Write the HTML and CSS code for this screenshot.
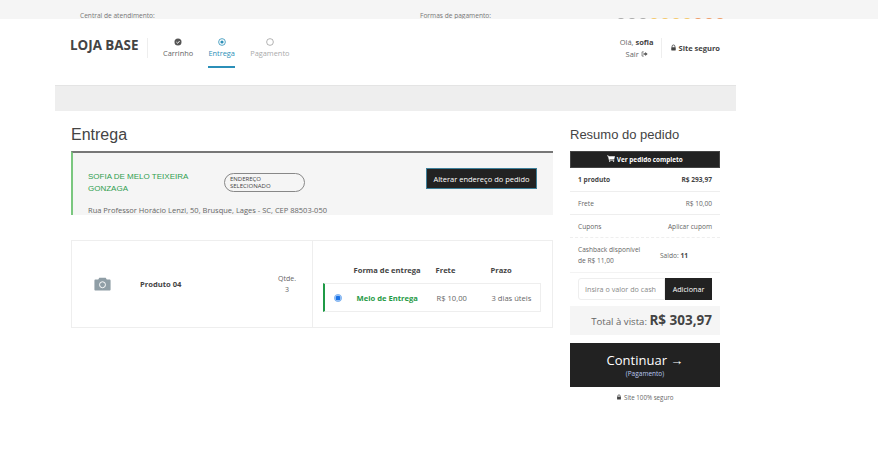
FILE: index.html
```html
<!DOCTYPE html>
<html lang="pt-BR">
<head>
    <meta charset="UTF-8">
    <meta name="viewport" content="width=device-width, initial-scale=1.0">
    <title>Entrega - Loja Base</title>
    <link rel="stylesheet" href="styles.css">
</head>
<body>

    <div class="topbar">
        <span class="topbar-atend">Central de atendimento:</span>
        <span class="topbar-pag">Formas de pagamento:</span>
        <div class="pay-icons">
            <i class="pay-dark"></i><i class="pay-dark"></i><i class="pay-dark"></i>
            <i class="pay-yellow"></i><i class="pay-yellow"></i><i class="pay-yellow"></i><i class="pay-yellow"></i>
            <i class="pay-orange"></i><i class="pay-orange"></i><i class="pay-orange"></i>
        </div>
    </div>

    <header class="header">
        <div class="logo">LOJA BASE</div>
        <nav class="steps">
            <div class="step step-done">
                <svg class="step-icon" viewBox="0 0 10 10"><circle cx="5" cy="5" r="4.4" fill="#555"/><path d="M3 5.1l1.5 1.5L7 3.8" fill="none" stroke="#fff" stroke-width="1.2"/></svg>
                <span>Carrinho</span>
            </div>
            <div class="step step-active">
                <svg class="step-icon" viewBox="0 0 10 10"><circle cx="5" cy="5" r="4.2" fill="none" stroke="#2b8fb8" stroke-width="1"/><circle cx="5" cy="5" r="2" fill="#2b8fb8"/></svg>
                <span>Entrega</span>
            </div>
            <div class="step step-next">
                <svg class="step-icon" viewBox="0 0 10 10"><circle cx="5" cy="5" r="4.2" fill="none" stroke="#888" stroke-width="0.8"/></svg>
                <span>Pagamento</span>
            </div>
        </nav>
        <div class="user">
            <div>Olá, <b>sofia</b></div>
            <div>Sair
                <svg class="exit-icon" viewBox="0 0 10 8"><path d="M4 1H1.5v6H4" fill="none" stroke="#555" stroke-width="1"/><path d="M3.5 3h2.5V1l3.5 3-3.5 3V5H3.5z" fill="#555"/></svg>
            </div>
        </div>
        <div class="secure">
            <svg class="lock-icon" viewBox="0 0 10 10"><path d="M3 5V3.4a2 2 0 0 1 4 0V5" fill="none" stroke="#444" stroke-width="1.2"/><rect x="1.8" y="4.6" width="6.4" height="4.6" rx="0.6" fill="#444"/></svg>
            Site seguro
        </div>
    </header>

    <div class="notice-bar"></div>

    <main class="content">
        <section class="delivery">
            <h1>Entrega</h1>

            <div class="address">
                <div class="address-top">
                    <div class="address-name">SOFIA DE MELO TEIXEIRA GONZAGA</div>
                    <div class="address-tag">ENDEREÇO<br>SELECIONADO</div>
                    <button class="btn-address">Alterar endereço do pedido</button>
                </div>
                <div class="address-line">Rua Professor Horácio Lenzi, 50, Brusque, Lages - SC, CEP 88503-050</div>
            </div>

            <div class="shipment">
                <div class="product">
                    <svg class="camera" viewBox="0 0 16 13"><path d="M5 0.5h6l1 1.8h2.6c.6 0 1 .4 1 1v8.4c0 .6-.4 1-1 1H1.4c-.6 0-1-.4-1-1V3.3c0-.6.4-1 1-1H4z" fill="#8f9ea6"/><circle cx="8" cy="7.2" r="2.8" fill="none" stroke="#fff" stroke-width="0.9"/></svg>
                    <div class="product-name">Produto 04</div>
                    <div class="product-qty">Qtde.<br>3</div>
                </div>
                <div class="shipping">
                    <div class="shipping-head">
                        <span class="col-name">Forma de entrega</span>
                        <span class="col-price">Frete</span>
                        <span class="col-time">Prazo</span>
                    </div>
                    <div class="shipping-row">
                        <span class="radio"></span>
                        <span class="col-name option-name">Meio de Entrega</span>
                        <span class="col-price">R$ 10,00</span>
                        <span class="col-time">3 dias úteis</span>
                    </div>
                </div>
            </div>
        </section>

        <aside class="summary">
            <h2>Resumo do pedido</h2>
            <button class="btn-order">
                <svg class="cart-icon" viewBox="0 0 12 10"><path d="M0 .6h2l.5 1.2H12l-1.2 4.4H3.6L3.9 7h7v.9H3L1.5 1.5H0z" fill="#fff"/><circle cx="4" cy="9" r="1" fill="#fff"/><circle cx="9.8" cy="9" r="1" fill="#fff"/></svg>
                Ver pedido completo
            </button>
            <div class="sum-row sum-strong"><span>1 produto</span><span>R$ 293,97</span></div>
            <div class="sum-row"><span>Frete</span><span>R$ 10,00</span></div>
            <div class="sum-row sum-dashed"><span>Cupons</span><span class="coupon">Aplicar cupom</span></div>
            <div class="sum-row sum-cash">
                <span class="cash-label">Cashback disponível<br>de R$ 11,00</span>
                <span class="cash-balance">Saldo: <b>11</b></span>
            </div>
            <div class="cash-form">
                <input type="text" class="cash-input" placeholder="Insira o valor do cash">
                <button class="btn-cash">Adicionar</button>
            </div>
            <div class="total">Total à vista: <b>R$ 303,97</b></div>
            <button class="btn-continue">
                <span class="continue-main">Continuar →</span>
                <span class="continue-sub">(Pagamento)</span>
            </button>
            <div class="safe">
                <svg class="lock-icon-sm" viewBox="0 0 10 10"><path d="M3 5V3.4a2 2 0 0 1 4 0V5" fill="none" stroke="#444" stroke-width="1.2"/><rect x="1.8" y="4.6" width="6.4" height="4.6" rx="0.6" fill="#444"/></svg>
                Site 100% seguro
            </div>
        </aside>
    </main>

</body>
</html>
```

FILE: styles.css
```css
* {
    box-sizing: border-box;
}

html,
body {
    margin: 0;
    padding: 0;
}

body {
    font-family: 'Open Sans', sans-serif;
    color: #666;
    background-color: #fff;
    width: 878px;
    height: 450px;
    overflow: hidden;
}

button {
    font-family: inherit;
    cursor: pointer;
}

/* top strip */
.topbar {
    height: 19px;
    background-color: #f5f5f5;
    font-size: 6.6px;
    color: #777;
    padding-top: 11px;
    padding-left: 80px;
    display: flex;
    overflow: hidden;
}

.topbar-atend {
    width: 340px;
    flex-shrink: 0;
}

.topbar-pag {
    width: 197px;
    flex-shrink: 0;
}

.pay-icons {
    display: flex;
    gap: 3px;
    padding-top: 7px;
}

.pay-icons i {
    display: block;
    width: 8px;
    height: 8px;
    border-radius: 50%;
}

.pay-dark {
    background-color: #aaa;
}

.pay-yellow {
    background-color: #f4c86a;
}

.pay-orange {
    background-color: #ef9b66;
}

/* header */
.header {
    height: 66px;
    display: flex;
    align-items: flex-start;
    padding-left: 70px;
}

.logo {
    font-size: 13.4px;
    font-weight: 700;
    color: #444;
    width: 77px;
    height: 20px;
    line-height: 20px;
    margin-top: 16px;
    white-space: nowrap;
}

.steps {
    display: flex;
    border-left: 1px solid #eee;
    margin-top: 19px;
    height: 20px;
    padding-left: 15px;
    gap: 15px;
}

.step {
    display: flex;
    flex-direction: column;
    align-items: center;
    font-size: 7.4px;
    height: 49px;
    color: #666;
}

.step-icon {
    width: 8px;
    height: 8px;
    margin-bottom: 2px;
}

.step-active {
    color: #2b8fb8;
    border-bottom: 2px solid #2b8fb8;
    width: 27px;
    height: 30px;
    white-space: nowrap;
}

.step-next {
    color: #aaa;
}

.user {
    margin-left: auto;
    text-align: center;
    font-size: 7.5px;
    line-height: 12px;
    margin-top: 17px;
    width: 34px;
    white-space: nowrap;
}

.user b {
    color: #444;
}

.exit-icon {
    width: 7px;
    height: 6px;
}

.secure {
    margin-top: 19px;
    margin-left: 7px;
    margin-right: 158px;
    padding-left: 8px;
    height: 20px;
    line-height: 21px;
    border-left: 1px solid #eee;
    font-size: 7.5px;
    font-weight: 700;
    color: #444;
    white-space: nowrap;
}

.lock-icon {
    width: 7px;
    height: 7px;
}

.notice-bar {
    width: 681px;
    height: 26px;
    margin-left: 55px;
    background-color: #eee;
    border-top: 1px solid #e4e4e4;
}

/* main */
.content {
    display: flex;
    padding-left: 71px;
}

.delivery {
    width: 482px;
}

h1 {
    font-family: 'Liberation Sans', Arial, sans-serif;
    font-weight: 400;
    font-size: 16px;
    color: #444;
    margin: 14px 0 7px;
    line-height: 19px;
}

.address {
    height: 64px;
    background-color: #f5f5f5;
    border-top: 2px solid #777;
    border-left: 2px solid #7ac77f;
    padding: 18px 16px 0 15px;
}

.address-top {
    display: flex;
    align-items: flex-start;
}

.address-name {
    font-family: 'Liberation Sans', Arial, sans-serif;
    font-size: 8px;
    line-height: 12px;
    color: #2f9e4f;
    width: 136px;
    flex-shrink: 0;
}

.address-tag {
    width: 81px;
    height: 19px;
    border: 1px solid #888;
    border-radius: 10px;
    font-size: 6px;
    line-height: 7px;
    padding: 2px 0 0 5px;
    margin-top: 2px;
    color: #444;
}

.btn-address {
    margin-left: auto;
    margin-top: -3px;
    width: 111px;
    height: 21px;
    background-color: #222;
    border: 1px solid #3d7f99;
    color: #fff;
    font-size: 7.5px;
    padding: 0;
    white-space: nowrap;
}

.address-line {
    font-size: 7.5px;
    line-height: 10px;
    margin-top: 10px;
    white-space: nowrap;
}

.shipment {
    display: flex;
    height: 88px;
    margin-top: 25px;
    border: 1px solid #eee;
}

.product {
    width: 241px;
    display: flex;
    align-items: center;
    border-right: 1px solid #eee;
    height: 86px;
    padding: 0 0 0 22px;
    font-size: 7.6px;
}

.camera {
    width: 17px;
    height: 14px;
    margin-right: 29px;
    margin-top: -1px;
}

.product-name {
    font-weight: 700;
    color: #444;
    width: 138px;
    flex-shrink: 0;
}

.product-qty {
    line-height: 10.5px;
    text-align: center;
    margin-top: 1px;
    width: 18px;
    font-size: 7px;
}

.shipping {
    width: 240px;
    padding: 24px 0 0 10px;
    font-size: 7.6px;
}

.shipping-head {
    display: flex;
    font-weight: 700;
    color: #444;
    height: 18px;
    line-height: 11px;
}

.col-name {
    margin-left: 31px;
    width: 82px;
    flex-shrink: 0;
    white-space: nowrap;
}

.col-price {
    width: 55px;
    flex-shrink: 0;
}

.col-time {
    white-space: nowrap;
}

.shipping-row {
    display: flex;
    align-items: center;
    width: 218px;
    height: 29px;
    border-top: 1px solid #eee;
    border-right: 1px solid #eee;
    border-bottom: 1px solid #eee;
    border-left: 2px solid #1f9a46;
    padding-left: 9px;
}

.radio {
    width: 8px;
    height: 8px;
    border-radius: 50%;
    border: 1.5px solid #8fbdf2;
    background-color: #1a73e8;
    box-shadow: inset 0 0 0 0.5px #fff;
    flex-shrink: 0;
}

.shipping-row .col-name {
    margin-left: 15px;
    width: 80px;
}

.option-name {
    font-weight: 700;
    color: #1f9a46;
}

/* resumo */
.summary {
    width: 150px;
    margin-left: 17px;
}

h2 {
    font-family: 'Liberation Sans', Arial, sans-serif;
    font-weight: 400;
    font-size: 13px;
    color: #444;
    margin: 16px 0 8px;
    line-height: 16px;
}

.btn-order {
    width: 150px;
    height: 17px;
    background-color: #222;
    border: 1px solid #444;
    color: #fff;
    font-size: 6.4px;
    font-weight: 700;
    padding: 0;
    display: block;
}

.cart-icon {
    width: 8px;
    height: 7px;
}

.sum-row {
    display: flex;
    justify-content: space-between;
    align-items: center;
    height: 23px;
    padding: 0 8px;
    border-bottom: 1px solid #eee;
    font-size: 6.6px;
}

.sum-strong {
    height: 24px;
    font-weight: 700;
    color: #444;
}

.sum-dashed {
    border-bottom: 1px dashed #eee;
}

.sum-cash {
    height: 35px;
    justify-content: flex-start;
    border-bottom: 1px solid #f3f3f3;
}

.cash-label {
    width: 82px;
    line-height: 11px;
    flex-shrink: 0;
}

.cash-balance b {
    color: #444;
}

.cash-form {
    display: flex;
    margin: 5px 8px 0;
    height: 22px;
}

.cash-input {
    width: 87px;
    height: 22px;
    border: 1px solid #eee;
    border-radius: 3px 0 0 3px;
    font-family: inherit;
    font-size: 7.2px;
    padding: 0 6px;
    flex-shrink: 0;
}

.cash-input::placeholder {
    color: #888;
}

.btn-cash {
    flex: 1;
    background-color: #222;
    border: none;
    color: #fff;
    font-size: 7.2px;
    padding: 0;
}

.total {
    margin-top: 6px;
    height: 29px;
    background-color: #f5f5f5;
    text-align: right;
    padding-right: 8px;
    font-size: 9.6px;
    line-height: 28px;
    white-space: nowrap;
}

.total b {
    font-size: 13.5px;
    color: #444;
}

.btn-continue {
    width: 150px;
    height: 44px;
    margin-top: 8px;
    background-color: #222;
    border: none;
    color: #fff;
    padding: 0;
    display: flex;
    flex-direction: column;
    align-items: center;
    justify-content: center;
}

.continue-main {
    font-size: 13px;
    line-height: 17px;
}

.continue-sub {
    font-size: 6.5px;
    line-height: 9px;
    color: #b9c8f0;
}

.safe {
    text-align: center;
    font-size: 6.2px;
    margin-top: 6px;
}

.lock-icon-sm {
    width: 6px;
    height: 6px;
}
```
